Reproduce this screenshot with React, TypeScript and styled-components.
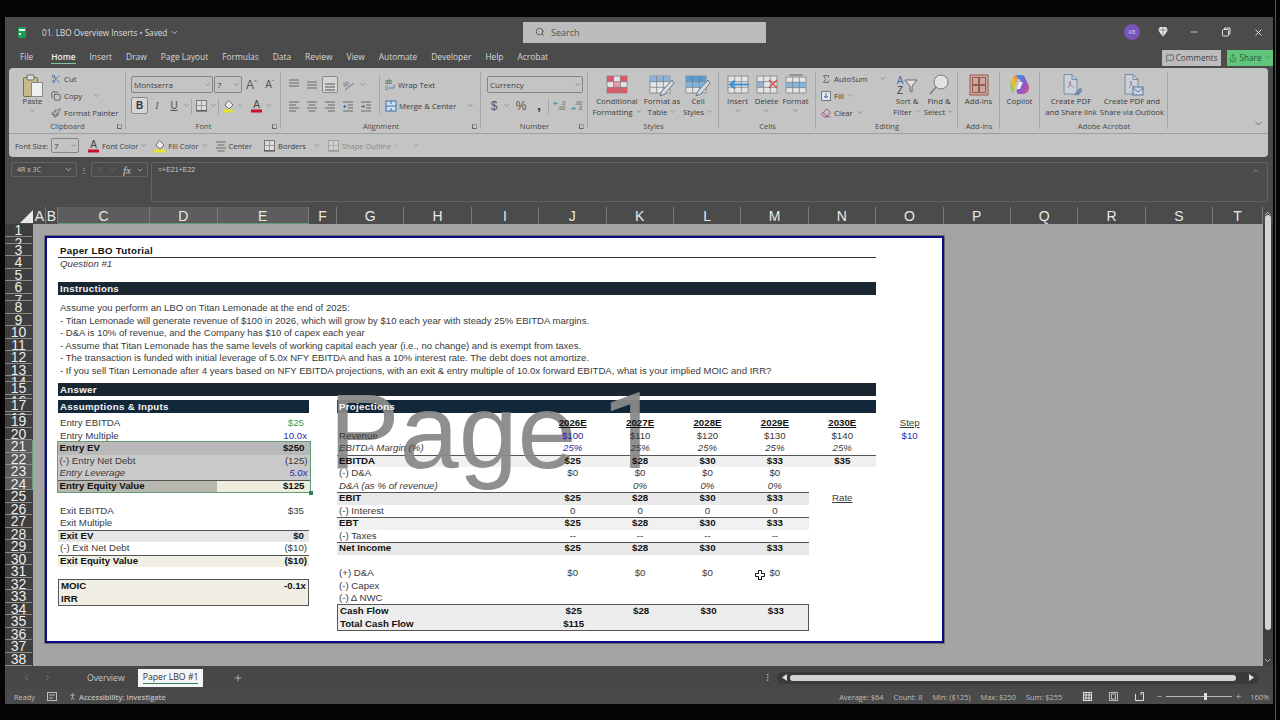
import React from 'react';
import styled, { createGlobalStyle } from 'styled-components';
import { ChevronDown, ChevronUp, Minus, Search, X, Check, Plus, Copy as CopyIcon, MessageSquare, Share as ShareIcon, ChevronLeft, ChevronRight, MoreVertical, Scissors, Sigma, Paintbrush, Eraser, PersonStanding } from 'lucide-react';

const GlobalStyle = createGlobalStyle`
  html, body { margin: 0; padding: 0; background: #000; overflow: hidden; }
  * { box-sizing: border-box; }
  body { font-family: "Open Sans", "Liberation Sans", sans-serif; }
`;

const Screen = styled.div`
  width: 1280px;
  height: 720px;
  padding: 17px 7px 16px 5px;
  background: linear-gradient(to right, #050505 1275px, #1c7a2c 1275px, #1c7a2c 1276px, #050505 1276px);
`;

const Excel = styled.div`
  height: 687px;
  display: flex;
  flex-direction: column;
  background: #4b4b4b;
  color: #333;
`;

/* title bar */
const TitleBar = styled.div`
  height: 30px;
  flex: none;
  display: flex;
  align-items: center;
  padding: 0 9.5px 0 13px;
  color: #ddd;
  font-size: 8.2px;
`;
const DocTitle = styled.div`
  width: 481px;
  margin-left: 16px;
  display: flex;
  align-items: center;
  gap: 3px;
`;
const SearchBox = styled.div`
  width: 243px;
  height: 21px;
  background: #bcbcbc;
  color: #555;
  display: flex;
  align-items: center;
  gap: 6px;
  padding-left: 12px;
  font-size: 9px;
`;
const WindowButtons = styled.div`
  margin-left: auto;
  display: flex;
  align-items: center;
  color: #e4e4e4;
`;
const WinBtn = styled.div<{ $ml: number }>`
  display: flex;
  margin-left: ${p => p.$ml}px;
`;
const Avatar = styled.div`
  width: 16px;
  height: 16px;
  border-radius: 50%;
  background: #7a54b8;
  color: #d8c8f0;
  font-size: 5.5px;
  display: flex;
  align-items: center;
  justify-content: center;
`;

/* tabs */
const MenuBar = styled.div`
  height: 21px;
  flex: none;
  display: flex;
  align-items: center;
  padding-left: 15px;
  gap: 14px;
  font-size: 8.4px;
  color: #d8d8d8;
`;
const MenuTab = styled.div<{ $active?: boolean }>`
  font-weight: ${p => (p.$active ? 600 : 400)};
  color: ${p => (p.$active ? '#f0f0f0' : '#d8d8d8')};
  border-bottom: 1px solid ${p => (p.$active ? '#7fc79a' : 'transparent')};
  padding-bottom: 1px;
  margin-left: ${p => (p.$active ? '4px' : '0')};
`;
const Comments = styled.div`
  margin-left: auto;
  width: 59px;
  height: 16px;
  background: #bcbcbc;
  color: #444;
  font-size: 8.2px;
  display: flex;
  align-items: center;
  justify-content: center;
  gap: 2px;
`;
const ShareBtn = styled.div`
  width: 46px;
  height: 16px;
  margin-left: -8px;
  background: #5fc67c;
  color: #2d5a3a;
  font-size: 8.2px;
  display: flex;
  align-items: center;
  justify-content: center;
  gap: 2px;
`;

/* ribbon */
const RibbonWrap = styled.div`
  margin: 0 5px 0 4px;
  height: 89px;
  flex: none;
  background: #c4c4c4;
  border-radius: 4px;
  overflow: hidden;
  font-size: 7.8px;
  color: #3c3c3c;
  white-space: nowrap;
`;
const RibbonMain = styled.div`
  height: 66px;
  display: flex;
  border-bottom: 1px solid #9f9f9f;
  position: relative;
`;
const Group = styled.div<{ $w: number; $plain?: boolean }>`
  width: ${p => p.$w}px;
  flex: none;
  display: flex;
  flex-direction: column;
  position: relative;
  &::after {
    content: '';
    display: ${p => (p.$plain ? 'none' : 'block')};
    position: absolute;
    right: 0;
    top: 4px;
    bottom: 4px;
    width: 1px;
    background: #a6a6a6;
  }
`;
const GroupBody = styled.div<{ $pl?: number; $gap?: number }>`
  height: 53px;
  display: flex;
  padding-left: ${p => p.$pl ?? 0}px;
  gap: ${p => p.$gap ?? 0}px;
`;
const GroupLabel = styled.div`
  height: 12px;
  line-height: 10px;
  text-align: center;
  font-size: 7.6px;
  color: #4a4a4a;
`;
const Launcher = styled.div`
  position: absolute;
  right: 4px;
  bottom: 4px;
  width: 5px;
  height: 5px;
  border-left: 1px solid #666;
  border-bottom: 1px solid #666;
  border-top: 1px solid #999;
  border-right: 1px solid #999;
`;
const Collapse = styled(ChevronDown).attrs({ size: 11, color: '#666' })`
  position: absolute;
  right: 4px;
  bottom: 4px;
`;
const BigBtn = styled.div<{ $w: number; $top?: number }>`
  width: ${p => p.$w}px;
  flex: none;
  display: flex;
  flex-direction: column;
  align-items: center;
  padding-top: ${p => p.$top ?? 6}px;
  line-height: 11px;
  text-align: center;
`;
const BigIcon = styled.div<{ $h?: number }>`
  height: ${p => p.$h ?? 21}px;
  display: flex;
  align-items: center;
  justify-content: center;
  margin-bottom: 0.5px;
`;
const SmallCol = styled.div<{ $w?: number }>`
  display: flex;
  flex-direction: column;
  padding-top: 2px;
  width: ${p => (p.$w ? `${p.$w}px` : 'auto')};
`;
const SmallBtn = styled.div`
  height: 17px;
  display: flex;
  align-items: center;
  gap: 3px;
`;
const FormCol = styled.div`
  display: flex;
  flex-direction: column;
  gap: 4px;
  padding-top: 8px;
`;
const FormRow = styled.div<{ $gap?: number }>`
  height: 17px;
  display: flex;
  align-items: center;
  gap: ${p => p.$gap ?? 0}px;
`;
const Select = styled.div<{ $w: number; $h?: number }>`
  width: ${p => p.$w}px;
  height: ${p => p.$h ?? 17}px;
  flex: none;
  border: 1px solid #858585;
  border-radius: 2px;
  padding: 0 1px 0 2px;
  display: flex;
  align-items: center;
  justify-content: space-between;
  font-size: 8px;
`;
const Toggle = styled.div<{ $on?: boolean; $w?: number; $size?: number; $ml?: number; $c?: string; $serif?: boolean }>`
  width: ${p => p.$w ?? 16}px;
  height: 17px;
  flex: none;
  margin-left: ${p => p.$ml ?? 0}px;
  display: flex;
  align-items: center;
  justify-content: center;
  border: 1px solid ${p => (p.$on ? '#8a8a8a' : 'transparent')};
  border-radius: 2px;
  background: ${p => (p.$on ? '#d6d6d6' : 'transparent')};
  font-family: ${p => (p.$serif ? '"Liberation Serif", serif' : '"Liberation Sans", sans-serif')};
  font-size: ${p => p.$size ?? 10}px;
  color: ${p => p.$c ?? '#555'};
`;
const Mini = styled.span`
  font-size: 6px;
  align-self: flex-start;
  margin-top: 2px;
`;
const VRule = styled.div<{ $h?: number; $mt?: number }>`
  width: 1px;
  height: ${p => p.$h ?? 16}px;
  margin-top: ${p => p.$mt ?? 0}px;
  flex: none;
  background: #a6a6a6;
`;
const Caret = styled(ChevronDown).attrs({ size: 7, strokeWidth: 1.6 })<{ $ml?: number }>`
  flex: none;
  color: #555;
  margin-left: ${p => p.$ml ?? 0}px;
`;

/* quick access row */
const QuickBar = styled.div`
  height: 23px;
  display: flex;
  align-items: center;
  padding-left: 6px;
  font-size: 7.5px;
`;
const QuickLabel = styled.span`
  width: 36px;
`;
const QuickItem = styled.div<{ $dim?: boolean; $ml: number }>`
  display: flex;
  align-items: center;
  gap: 2px;
  margin-left: ${p => p.$ml}px;
  opacity: ${p => (p.$dim ? 0.45 : 1)};
`;

/* formula bar */
const FormulaBar = styled.div`
  height: 40px;
  flex: none;
  margin: 5px 5px 5px 6px;
  display: flex;
  align-items: flex-start;
  color: #c8c8c8;
`;
const NameBox = styled.div`
  width: 66px;
  height: 15px;
  border: 1px solid #636363;
  border-radius: 2px;
  font-size: 7px;
  display: flex;
  align-items: center;
  justify-content: space-between;
  padding: 0 3px 0 5px;
`;
const Dots = styled.div`
  width: 14px;
  text-align: center;
  font-size: 8px;
  line-height: 15px;
`;
const FxBox = styled.div`
  width: 57px;
  height: 15px;
  border: 1px solid #636363;
  border-radius: 2px;
  display: flex;
  align-items: center;
  justify-content: space-between;
  padding: 0 3px;
  color: #6d6d6d;
  font-family: "Liberation Serif", serif;
  font-style: italic;
  font-size: 11px;
`;
const FxMark = styled.span`
  color: #c8c8c8;
`;
const FormulaInput = styled.div`
  flex: 1;
  height: 40px;
  margin-left: 3px;
  border: 1px solid #636363;
  border-radius: 2px;
  padding: 3px 6px;
  font-family: "Liberation Sans", sans-serif;
  font-size: 7px;
  display: flex;
  justify-content: space-between;
`;

/* sheet */
const ColHeaders = styled.div`
  height: 17px;
  flex: none;
  display: flex;
  align-items: stretch;
  font-family: "Liberation Sans", sans-serif;
  color: #e8e8e8;
  font-size: 14px;
`;
const Corner = styled.div`
  width: 29px;
  flex: none;
  display: flex;
  align-items: flex-end;
  justify-content: flex-end;
  padding: 0 1px 1px 0;
`;
const ColHead = styled.div<{ $w: number; $on?: boolean }>`
  width: ${p => p.$w}px;
  flex: none;
  text-align: center;
  line-height: 18px;
  background: ${p => (p.$on ? '#5d5d5d' : 'transparent')};
  border-right: 1px solid #7a7a7a;
  border-bottom: 1px solid ${p => (p.$on ? '#5f9f78' : 'transparent')};
`;
const SheetBody = styled.div`
  height: 442px;
  flex: none;
  display: flex;
`;
const RowHeaders = styled.div`
  width: 28px;
  flex: none;
  overflow: hidden;
  font-family: "Liberation Sans", sans-serif;
  color: #ececec;
  font-size: 14px;
  background: #3e3e3e;
`;
const RowHead = styled.div<{ $h: number; $on?: boolean }>`
  height: ${p => p.$h}px;
  line-height: ${p => Math.max(p.$h, 12)}px;
  overflow: hidden;
  text-align: center;
  background: ${p => (p.$on ? '#5a5a5a' : '#3e3e3e')};
  box-shadow: inset 0 -1px 0 #8a8a8a;
  border-right: 1px solid ${p => (p.$on ? '#5f9f78' : '#3e3e3e')};
`;
const Canvas = styled.div`
  width: 1230px;
  flex: none;
  background: #a4a4a4;
  padding: 12px 0 0 12px;
  overflow: hidden;
`;
const Page = styled.div`
  position: relative;
  width: 899px;
  height: 407px;
  padding: 7px 0 0 11px;
  background: #fff;
  border: 2px solid #0c0c85;
  box-shadow: 0 0 0 0.5px #333;
  font-family: "Liberation Sans", sans-serif;
  font-size: 9.7px;
  color: #3a3a3a;
  white-space: nowrap;
`;
const Watermark = styled.div`
  position: absolute;
  left: 282px;
  top: 140px;
  z-index: 1;
  font-size: 106px;
  line-height: 106px;
  color: #8a8a8a;
  opacity: 0.95;
  pointer-events: none;
`;
const WatermarkDigit = styled.span`
  font-family: Roboto, "Liberation Sans", sans-serif;
  margin-left: -4px;
`;
const Cursor = styled.div`
  position: absolute;
  left: 708px;
  top: 332px;
  z-index: 3;
  width: 10px;
  height: 10px;
`;
const Txt = styled.span<{ $b?: boolean; $i?: boolean; $c?: string; $u?: boolean; $pr?: number }>`
  position: relative;
  z-index: 2;
  font-weight: ${p => (p.$b ? 700 : 400)};
  font-style: ${p => (p.$i ? 'italic' : 'normal')};
  color: ${p => p.$c ?? (p.$b ? '#111' : 'inherit')};
  text-decoration: ${p => (p.$u ? 'underline' : 'none')};
  padding-right: ${p => p.$pr ?? 0}px;
`;
const SheetTitle = styled(Txt)`
  letter-spacing: 0.3px;
`;
const Line = styled.div<{ $h?: number; $rule?: boolean }>`
  width: 818px;
  height: ${p => p.$h ?? 12.53}px;
  line-height: ${p => p.$h ?? 12.53}px;
  padding-left: 2px;
  overflow: hidden;
  box-shadow: ${p => (p.$rule ? 'inset 0 -1px 0 #333' : 'none')};
`;
const Instruction = styled(Line)`
  font-size: 9.55px;
`;
const Band = styled.div<{ $w?: number; $h?: number; $navy?: boolean }>`
  width: ${p => p.$w ?? 818}px;
  height: ${p => p.$h ?? 13}px;
  line-height: ${p => p.$h ?? 13}px;
  padding-left: 2px;
  background: ${p => (p.$navy ? '#12283a' : '#1a2733')};
  color: #f4f4f4;
  font-weight: 700;
  letter-spacing: 0.3px;
`;
const Spacer = styled.div<{ $h: number }>`
  height: ${p => p.$h}px;
`;
const Split = styled.div`
  display: flex;
  align-items: flex-start;
  gap: 28px;
`;
const LeftCol = styled.div`
  width: 251px;
  flex: none;
`;
const RightCol = styled.div`
  width: 606px;
  flex: none;
`;
const KV = styled.div<{ $fill?: string; $top?: boolean; $half?: string }>`
  height: 12.53px;
  line-height: 12.53px;
  display: flex;
  justify-content: space-between;
  padding: 0 2px;
  background: ${p => (p.$half ? `linear-gradient(to right, ${p.$half} 0 159px, ${p.$fill} 159px)` : p.$fill ?? 'transparent')};
  box-shadow: ${p => (p.$top ? 'inset 0 1px 0 #555' : 'none')};
`;
const Selection = styled.div`
  position: relative;
  margin: -1px -1.5px -1px -1.5px;
  border: 1.5px solid #5f9f78;
  &::after {
    content: '';
    position: absolute;
    right: -3px;
    bottom: -3px;
    width: 4px;
    height: 4px;
    background: #2f7d52;
  }
`;
const Boxed = styled.div<{ $w?: number }>`
  width: ${p => (p.$w ? `${p.$w}px` : 'auto')};
  border: 1px solid #555;
  margin-top: -0.5px;
`;
const ProjRow = styled.div<{ $fill?: string; $top?: boolean; $reach?: number }>`
  height: 12.53px;
  line-height: 12.53px;
  display: grid;
  grid-template-columns: 202px repeat(6, 67.4px);
  background-repeat: no-repeat;
  background-size: ${p => p.$reach ?? 539}px 100%;
  background-image: ${p =>
    `linear-gradient(to bottom, ${p.$top ? '#555 0 1px,' : ''} ${p.$fill ?? 'transparent'} ${p.$top ? '1px' : '0'})`};
`;
const Label = styled.div`
  padding-left: 2px;
`;
const Val = styled.div`
  text-align: center;
`;

/* tabs and status */
const TabsBar = styled.div`
  height: 23px;
  flex: none;
  display: flex;
  align-items: center;
  color: #bdbdbd;
  font-size: 8.7px;
  background: #474747;
  padding-left: 17px;
`;
const NavArrow = styled.div<{ $ml?: number }>`
  display: flex;
  margin-left: ${p => p.$ml ?? 0}px;
  color: #888;
`;
const SheetTab = styled.div<{ $active?: boolean }>`
  height: ${p => (p.$active ? '18px' : 'auto')};
  margin-left: ${p => (p.$active ? '8px' : '30px')};
  padding: 0 5px;
  background: ${p => (p.$active ? '#f6f6f6' : 'transparent')};
  color: ${p => (p.$active ? '#333' : '#c4c4c4')};
  display: flex;
  align-items: center;
`;
const ActiveLabel = styled.span`
  border-bottom: 1px solid #2f7d52;
  line-height: 12px;
`;
const AddSheet = styled(Plus).attrs({ size: 10 })`
  margin-left: 30px;
`;
const SplitDots = styled(MoreVertical).attrs({ size: 9 })`
  margin-left: 520px;
`;
const HScroll = styled.div`
  width: 482px;
  height: 12px;
  border-radius: 6px;
  background: #3a3a3a;
  margin-left: 5px;
  display: flex;
  align-items: center;
  padding: 0 5px;
  gap: 3px;
  color: #ddd;
`;
const Thumb = styled.div`
  flex: 1;
  height: 6px;
  border-radius: 3px;
  background: #d4d4d4;
  margin-right: 10px;
`;
const VScroll = styled.div`
  flex: 1;
  background: #3f3f3f;
  display: flex;
  flex-direction: column;
  align-items: center;
  padding: 0 1px 1px 0;
  color: #e4e4e4;
`;
const VThumb = styled.div`
  width: 6px;
  height: 415px;
  margin-top: -3px;
  border-radius: 3px;
  background: #d4d4d4;
`;
const UpArrow = styled(ChevronUp).attrs({ size: 9 })`
  margin-top: -15px;
  z-index: 1;
`;
const DownArrow = styled(ChevronDown).attrs({ size: 9 })`
  margin-top: auto;
`;
const StatusBar = styled.div`
  height: 15px;
  flex: none;
  display: flex;
  align-items: center;
  padding: 0 4px 0 9px;
  font-size: 7.4px;
  color: #bfbfbf;
  background: #4a4a4a;
`;
const StatusIcon = styled.div`
  display: flex;
  margin-left: 12px;
`;
const Accessibility = styled.div`
  margin-left: 11px;
  display: flex;
  align-items: center;
  gap: 2px;
  font-weight: 600;
`;
const StatusStats = styled.div`
  margin-left: auto;
  display: flex;
  gap: 10px;
`;
const ViewBtns = styled.div`
  margin-left: 21px;
  display: flex;
  align-items: center;
  gap: 17px;
`;
const ZoomMinus = styled(Minus).attrs({ size: 7 })`
  margin-left: 12px;
`;
const Zoomer = styled.div`
  width: 66px;
  margin: 0 3px;
  height: 1px;
  background: #bbb;
  position: relative;
  &::after {
    content: '';
    position: absolute;
    left: 38px;
    top: -3px;
    width: 3px;
    height: 7px;
    background: #ddd;
  }
`;
const ZoomPct = styled.span`
  margin-left: 8px;
`;

/* drawings */
const Svg = ({ w, h, vb, children }: { w: number; h: number; vb?: string; children: React.ReactNode }) => (
  <svg width={w} height={h} viewBox={vb ?? `0 0 ${w} ${h}`} fill="none">
    {children}
  </svg>
);

const Lines = ({ align, boxed }: { align: 'l' | 'c' | 'r' | 'top' | 'mid' | 'bot'; boxed?: boolean }) => {
  const rows = align === 'top' ? [2, 5, 8] : align === 'mid' ? [4, 7, 10] : align === 'bot' ? [6, 9, 12] : [3, 6, 9, 12];
  return (
    <Svg w={12} h={14}>
      {rows.map((y, i) => {
        const short = i % 2 === 1 && 'lcr'.includes(align);
        const x1 = short && align === 'r' ? 4 : short && align === 'c' ? 2.5 : 1;
        const x2 = short && align === 'l' ? 8 : short && align === 'c' ? 9.5 : 11;
        return <path key={y} d={`M${x1} ${y}H${x2}`} stroke={boxed ? '#555' : '#6a6a6a'} />;
      })}
    </Svg>
  );
};

const Indent = ({ flip }: { flip?: boolean }) => (
  <Svg w={12} h={14}>
    <path d="M1 3H11M6 6H11M6 9H11M1 12H11" stroke="#6a6a6a" />
    <path d={flip ? 'M1 7.5H4M3 6L4.5 7.5L3 9' : 'M4.5 7.5H1.5M3 6L1.5 7.5L3 9'} stroke="#3f6ea8" />
  </Svg>
);

const Table = ({ fill, head, x = 2, y = 2, w = 20, h = 17 }: { fill?: string[]; head?: string; x?: number; y?: number; w?: number; h?: number }) => {
  const cw = w / 3;
  const ch = h / 3;
  return (
    <>
      <rect x={x} y={y} width={w} height={h} fill="#e4e4e4" stroke="#777" strokeWidth=".7" />
      {head && <rect x={x} y={y} width={w} height={ch} fill={head} />}
      {fill?.map((c, i) => (
        <rect key={i} x={x + cw * (i % 3)} y={y + ch * Math.floor(i / 3)} width={cw} height={ch} fill={c} />
      ))}
      <path d={`M${x + cw} ${y}v${h}M${x + 2 * cw} ${y}v${h}M${x} ${y + ch}h${w}M${x} ${y + 2 * ch}h${w}`} stroke="#777" strokeWidth=".7" />
    </>
  );
};

const Brush = () => (
  <path d="M24 6 L14 17 L12 22 L17 20 L26 9 Z" fill="#d8d8d8" stroke="#5d7890" strokeWidth="1" />
);

const PasteIcon = () => (
  <Svg w={22} h={24}>
    <rect x="1.5" y="3.5" width="14" height="19" rx="1" fill="#c9b98c" stroke="#7a6c45" />
    <rect x="5" y="1" width="7" height="5" rx="1" fill="#ddd" stroke="#666" />
    <rect x="9.5" y="8.5" width="11" height="14" fill="#f0f0f0" stroke="#888" />
  </Svg>
);

const CopilotIcon = () => (
  <Svg w={21} h={23}>
    <defs>
      <linearGradient id="cp1" x1="0" y1="0" x2="1" y2="1">
        <stop offset="0" stopColor="#3aa0e8" />
        <stop offset=".5" stopColor="#7b5cd6" />
        <stop offset="1" stopColor="#e8517a" />
      </linearGradient>
      <linearGradient id="cp2" x1="0" y1="1" x2="1" y2="0">
        <stop offset="0" stopColor="#46c87a" />
        <stop offset=".5" stopColor="#e9c23c" />
        <stop offset="1" stopColor="#ef7d45" />
      </linearGradient>
    </defs>
    <path d="M7 2 H13 C15 2 16 4 17 7 L20 13 C21 17 18 21 14 21 L10 21 C8 21 7 19 8 17 L12 7 C9 6 7 5 7 2Z" fill="url(#cp1)" />
    <path d="M1 12 C1 7 4 3 7 2 C9 5 8 9 6 14 L5 18 C4 21 2 18 1 12Z" fill="url(#cp2)" />
    <path d="M10 9 L14 9 L11 16 L8 16Z" fill="#f3e9ef" />
  </Svg>
);

const PdfIcon = ({ mail }: { mail?: boolean }) => (
  <Svg w={23} h={24}>
    <path d="M4 1.5 H12 L17 6.5 V21 H4Z" stroke="#6d86a8" fill="#cdd0d6" strokeWidth=".9" />
    <path d="M12 1.5 V6.5 H17" stroke="#6d86a8" strokeWidth=".9" />
    <path d="M8 15 C10 12 11 9 10 8 C9 9 10 13 14 14" stroke="#8a6f7a" strokeWidth=".7" />
    {mail ? (
      <>
        <rect x="12" y="14" width="10" height="8" fill="#d0d4da" stroke="#4f78a8" />
        <path d="M12 15 L17 19 L22 15" stroke="#4f78a8" />
      </>
    ) : (
      <path d="M15 22 L21 15 M17.5 22 L22 17" stroke="#5e7da3" strokeWidth="1.4" />
    )}
  </Svg>
);

const FontColorIcon = ({ bar }: { bar: string }) => (
  <Svg w={13} h={14}>
    <text x="6.5" y="9" textAnchor="middle" fontFamily="Liberation Sans" fontSize="10" fill="#444">A</text>
    <rect x="1" y="10.5" width="11" height="3" fill={bar} />
  </Svg>
);
const FillIcon = ({ bar = '#e6e22e' }: { bar?: string }) => (
  <Svg w={13} h={14}>
    <path d="M6.5 1.5 L11 6 L7 10 L3 6Z" fill="#ececec" stroke="#555" strokeWidth=".8" />
    <rect x="1" y="10.5" width="11" height="3" fill={bar} />
  </Svg>
);
const BordersIcon = () => (
  <Svg w={13} h={13}>
    <rect x="1.5" y="1.5" width="10" height="10" fill="#ddd" stroke="#777" />
    <path d="M6.5 1.5v10M1.5 6.5h10" stroke="#999" />
    <path d="M1 12h11" stroke="#444" />
  </Svg>
);
const DecimalIcon = ({ more }: { more?: boolean }) => (
  <Svg w={15} h={13}>
    <text x="14" y="5.5" textAnchor="end" fontFamily="Liberation Sans" fontSize="6" fill="#555">{more ? '.0' : '.00'}</text>
    <text x="14" y="12" textAnchor="end" fontFamily="Liberation Sans" fontSize="6" fill="#555">{more ? '.00' : '.0'}</text>
    <path d={more ? 'M6 4H1M3 2L1 4L3 6' : 'M1 10H6M4 8L6 10L4 12'} stroke="#3f8aa8" />
  </Svg>
);

const COLS: [string, number, boolean?][] = [
  ['A', 12], ['B', 12], ['C', 92, true], ['D', 67.5, true], ['E', 91.5, true], ['F', 28], ['G', 67.4], ['H', 67.4], ['I', 67.4], ['J', 67.4],
  ['K', 67.4], ['L', 67.4], ['M', 67.4], ['N', 67.4], ['O', 67.4], ['P', 67.4], ['Q', 67.4], ['R', 67.4], ['S', 67.4], ['T', 50],
];

const rowHeight = (n: number) => {
  if (n === 2) return 7;
  if (n === 7) return 7.5;
  if (n === 14) return 6;
  if (n === 16) return 4.5;
  if (n === 18) return 3.5;
  return 12.53;
};
const ROWS = Array.from({ length: 38 }, (_, i) => i + 1);

const BLUE = '#2a2aa8';
const GREEN = '#3aa14a';

const INSTRUCTIONS = [
  'Assume you perform an LBO on Titan Lemonade at the end of 2025:',
  '- Titan Lemonade will generate revenue of $100 in 2026, which will grow by $10 each year with steady 25% EBITDA margins.',
  '- D&A is 10% of revenue, and the Company has $10 of capex each year',
  '- Assume that Titan Lemonade has the same levels of working capital each year (i.e., no change) and is exempt from taxes.',
  '- The transaction is funded with initial leverage of 5.0x NFY EBITDA and has a 10% interest rate. The debt does not amortize.',
  '- If you sell Titan Lemonade after 4 years based on NFY EBITDA projections, with an exit & entry multiple of 10.0x forward EBITDA, what is your implied MOIC and IRR?',
];

type Proj = {
  label: string;
  vals?: string[];
  b?: boolean;
  i?: boolean;
  fill?: string;
  top?: boolean;
  reach?: number;
  valColor?: string[];
  note?: string;
  noteU?: boolean;
  noteColor?: string;
  noteAt?: number;
};

const PROJ: Proj[] = [
  { label: '', vals: ['2026E', '2027E', '2028E', '2029E', '2030E'], b: true, note: 'Step', noteU: true },
  { label: 'Revenue', vals: ['$100', '$110', '$120', '$130', '$140'], valColor: [BLUE], note: '$10', noteColor: BLUE },
  { label: 'EBITDA Margin (%)', vals: ['25%', '25%', '25%', '25%', '25%'], i: true, valColor: [BLUE] },
  { label: 'EBITDA', vals: ['$25', '$28', '$30', '$33', '$35'], b: true, top: true, fill: '#f0f0f0' },
  { label: '(-) D&A', vals: ['$0', '$0', '$0', '$0'] },
  { label: 'D&A (as % of revenue)', vals: ['', '0%', '0%', '0%'], i: true },
  { label: 'EBIT', vals: ['$25', '$28', '$30', '$33'], b: true, top: true, fill: '#e8e8e8', reach: 472, note: 'Rate', noteU: true, noteAt: 4 },
  { label: '(-) Interest', vals: ['0', '0', '0', '0'] },
  { label: 'EBT', vals: ['$25', '$28', '$30', '$33'], b: true, top: true, fill: '#f1f1f1', reach: 472 },
  { label: '(-) Taxes', vals: ['--', '--', '--', '--'] },
  { label: 'Net Income', vals: ['$25', '$28', '$30', '$33'], b: true, top: true, fill: '#e8e8e8', reach: 472 },
  { label: '' },
  { label: '(+) D&A', vals: ['$0', '$0', '$0', '$0'] },
  { label: '(-) Capex' },
  { label: '(-) Δ NWC' },
];

const ProjLine = ({ r }: { r: Proj }) => (
  <ProjRow $fill={r.fill} $top={r.top} $reach={r.reach}>
    <Label>
      <Txt $b={r.b} $i={r.i}>{r.label}</Txt>
    </Label>
    {[0, 1, 2, 3, 4].map(i => (
      <Val key={i}>
        {r.noteAt === i ? (
          <Txt $u={r.noteU}>{r.note}</Txt>
        ) : (
          <Txt $b={r.b} $i={r.i} $u={r.label === ''} $c={r.valColor?.[i]}>{r.vals?.[i]}</Txt>
        )}
      </Val>
    ))}
    <Val>
      {r.noteAt === undefined && <Txt $u={r.noteU} $c={r.noteColor}>{r.note}</Txt>}
    </Val>
  </ProjRow>
);

const Ribbon = () => (
  <RibbonWrap>
    <RibbonMain>
      <Group $w={117}>
        <GroupBody $pl={10} $gap={5}>
          <BigBtn $w={27} $top={8}>
            <BigIcon $h={19}><PasteIcon /></BigIcon>
            Paste
            <Caret />
          </BigBtn>
          <SmallCol>
            <SmallBtn><Scissors size={10} color="#4a6f96" />Cut</SmallBtn>
            <SmallBtn><CopyIcon size={10} color="#555" />Copy <Caret $ml={8} /></SmallBtn>
            <SmallBtn><Paintbrush size={10} color="#555" />Format Painter</SmallBtn>
          </SmallCol>
        </GroupBody>
        <GroupLabel>Clipboard</GroupLabel>
        <Launcher />
      </Group>
      <Group $w={155}>
        <GroupBody $pl={5}>
          <FormCol>
            <FormRow $gap={1}>
              <Select $w={82}>Montserra<Caret /></Select>
              <Select $w={28}>7<Caret /></Select>
              <Toggle $w={17} $size={12}>A<Mini>^</Mini></Toggle>
              <Toggle $w={17} $size={10}>A<Mini>ˇ</Mini></Toggle>
            </FormRow>
            <FormRow $gap={1}>
              <Toggle $on $w={17} $c="#333"><b>B</b></Toggle>
              <Toggle $serif><i>I</i></Toggle>
              <Toggle><u>U</u></Toggle>
              <Caret />
              <VRule />
              <Toggle><BordersIcon /></Toggle>
              <Caret />
              <VRule />
              <Toggle><FillIcon /></Toggle>
              <Caret />
              <Toggle $ml={3}><FontColorIcon bar="#c8102e" /></Toggle>
              <Caret />
            </FormRow>
          </FormCol>
        </GroupBody>
        <GroupLabel>Font</GroupLabel>
        <Launcher />
      </Group>
      <Group $w={200}>
        <GroupBody $pl={5} $gap={5}>
          <FormCol>
            <FormRow $gap={2}>
              <Toggle><Lines align="top" /></Toggle>
              <Toggle><Lines align="mid" /></Toggle>
              <Toggle $on><Lines align="bot" boxed /></Toggle>
              <Toggle $ml={1}>
                <Svg w={14} h={12}>
                  <text x="1" y="7" fontFamily="Liberation Sans" fontSize="6" fill="#666" transform="rotate(-30 4 6)">ab</text>
                  <path d="M3 11L12 4" stroke="#6b6b9a" />
                </Svg>
              </Toggle>
              <Caret />
            </FormRow>
            <FormRow $gap={2}>
              <Toggle><Lines align="l" /></Toggle>
              <Toggle><Lines align="c" /></Toggle>
              <Toggle><Lines align="r" /></Toggle>
              <Toggle><Indent /></Toggle>
              <Toggle><Indent flip /></Toggle>
            </FormRow>
          </FormCol>
          <VRule $h={38} $mt={8} />
          <FormCol>
            <FormRow $gap={2}>
              <Svg w={11} h={13}>
                <text x="0" y="6" fontFamily="Liberation Sans" fontSize="6.5" fill="#555">ab</text>
                <text x="0" y="12" fontFamily="Liberation Sans" fontSize="6.5" fill="#3f6ea8">c</text>
                <path d="M4 10h4a1.5 1.5 0 000-3" stroke="#3f6ea8" strokeWidth=".8" />
              </Svg>
              <span>Wrap Text</span>
            </FormRow>
            <FormRow $gap={2}>
              <Svg w={12} h={12}><rect x="1" y="1" width="10" height="10" fill="#cfe0ee" stroke="#3f6ea8" /><path d="M1 6h10M6 1v3M6 8v3" stroke="#3f6ea8" /></Svg>
              <span>Merge &amp; Center</span>
              <Caret $ml={9} />
            </FormRow>
          </FormCol>
        </GroupBody>
        <GroupLabel>Alignment</GroupLabel>
        <Launcher />
      </Group>
      <Group $w={107}>
        <GroupBody $pl={6}>
          <FormCol>
            <Select $w={96}>Currency<Caret /></Select>
            <FormRow $gap={2}>
              <Toggle $w={14} $size={12}>$</Toggle>
              <Caret />
              <Toggle $w={18} $size={12}>%</Toggle>
              <Toggle $w={14} $size={13} $c="#333"><b>,</b></Toggle>
              <VRule />
              <Toggle $w={15} $ml={1}><DecimalIcon more /></Toggle>
              <Toggle $w={15}><DecimalIcon /></Toggle>
            </FormRow>
          </FormCol>
        </GroupBody>
        <GroupLabel>Number</GroupLabel>
        <Launcher />
      </Group>
      <Group $w={131}>
        <GroupBody $pl={3}>
          <BigBtn $w={52}>
            <BigIcon><Svg w={24} h={21}><Table fill={['#d85a6a', '', '#d85a6a', '', '#e89aa5', '', '#d85a6a', '#d85a6a', '#d85a6a']} /></Svg></BigIcon>
            Conditional
            <span>Formatting <Caret /></span>
          </BigBtn>
          <BigBtn $w={38}>
            <BigIcon><Svg w={28} h={22}><Table head="#8fb3d6" /><Brush /></Svg></BigIcon>
            Format as
            <span>Table <Caret /></span>
          </BigBtn>
          <BigBtn $w={34}>
            <BigIcon><Svg w={28} h={22}><Table head="#5b9bd5" fill={['', '', '', '#7fb5e0', '#7fb5e0', '#7fb5e0']} /><Brush /></Svg></BigIcon>
            Cell
            <span>Styles <Caret /></span>
          </BigBtn>
        </GroupBody>
        <GroupLabel>Styles</GroupLabel>
      </Group>
      <Group $w={97}>
        <GroupBody $pl={4}>
          <BigBtn $w={29}>
            <BigIcon>
              <Svg w={24} h={21}>
                <Table />
                <path d="M23 10.5H5M9 6.5L4 10.5L9 14.5" stroke="#3f8fd0" strokeWidth="2.2" />
              </Svg>
            </BigIcon>
            Insert
            <Caret />
          </BigBtn>
          <BigBtn $w={29}>
            <BigIcon><Svg w={24} h={21}><Table fill={['', '', '', '#8fb3d6', '', '']} /><path d="M14 6l8 8M22 6l-8 8" stroke="#d14a4a" strokeWidth="1.2" /></Svg></BigIcon>
            Delete
            <Caret />
          </BigBtn>
          <BigBtn $w={29}>
            <BigIcon>
              <Svg w={24} h={21}>
                <Table fill={['', '', '', '#7fb5e0', '#7fb5e0', '#7fb5e0']} y={3} h={16} />
                <path d="M5 1H19" stroke="#666" />
              </Svg>
            </BigIcon>
            Format
            <Caret />
          </BigBtn>
        </GroupBody>
        <GroupLabel>Cells</GroupLabel>
      </Group>
      <Group $w={142}>
        <GroupBody $pl={5}>
          <SmallCol $w={70}>
            <SmallBtn><Sigma size={10} color="#555" />AutoSum <Caret $ml={9} /></SmallBtn>
            <SmallBtn><Svg w={10} h={10}><rect x=".5" y=".5" width="9" height="9" fill="#dfe8f0" stroke="#777" /><path d="M5 2v5M3 5l2 2 2-2" stroke="#3f6ea8" /></Svg>Fill <Caret /></SmallBtn>
            <SmallBtn><Eraser size={10} color="#a03a78" />Clear <Caret /></SmallBtn>
          </SmallCol>
          <BigBtn $w={32}>
            <BigIcon>
              <Svg w={24} h={22}>
                <text x="5" y="10" textAnchor="middle" fontFamily="Liberation Sans" fontSize="10" fill="#3f6ea8">A</text>
                <text x="5" y="20" textAnchor="middle" fontFamily="Liberation Sans" fontSize="10" fill="#444">Z</text>
                <path d="M10 6h12l-5 6v6l-2-1v-5z" fill="#e4e4e4" stroke="#666" />
              </Svg>
            </BigIcon>
            Sort &amp;
            <span>Filter <Caret /></span>
          </BigBtn>
          <BigBtn $w={32}>
            <BigIcon>
              <Svg w={22} h={24}>
                <circle cx="13" cy="9" r="7" fill="#e3e3e3" stroke="#777" />
                <path d="M8 14L2 21" stroke="#777" strokeWidth="1.2" />
              </Svg>
            </BigIcon>
            Find &amp;
            <span>Select <Caret /></span>
          </BigBtn>
        </GroupBody>
        <GroupLabel>Editing</GroupLabel>
      </Group>
      <Group $w={42}>
        <GroupBody>
          <BigBtn $w={41}>
            <BigIcon>
              <Svg w={20} h={22}>
                <rect x="1" y="1" width="18" height="20" fill="#c8a9a2" stroke="#9c5a4e" />
                <rect x="3.5" y="3.5" width="6" height="7" stroke="#9c5a4e" />
                <rect x="10.5" y="3.5" width="6" height="7" stroke="#9c5a4e" />
                <rect x="3.5" y="11.5" width="6" height="7" stroke="#9c5a4e" />
                <rect x="10.5" y="11.5" width="6" height="7" stroke="#9c5a4e" />
              </Svg>
            </BigIcon>
            Add-ins
          </BigBtn>
        </GroupBody>
        <GroupLabel>Add-ins</GroupLabel>
      </Group>
      <Group $w={40}>
        <GroupBody>
          <BigBtn $w={39}>
            <BigIcon><CopilotIcon /></BigIcon>
            Copilot
          </BigBtn>
        </GroupBody>
        <GroupLabel />
      </Group>
      <Group $w={128}>
        <GroupBody $pl={3}>
          <BigBtn $w={56}>
            <BigIcon><PdfIcon /></BigIcon>
            Create PDF
            <span>and Share link</span>
          </BigBtn>
          <BigBtn $w={66}>
            <BigIcon><PdfIcon mail /></BigIcon>
            Create PDF and
            <span>Share via Outlook</span>
          </BigBtn>
        </GroupBody>
        <GroupLabel>Adobe Acrobat</GroupLabel>
      </Group>
      <Collapse />
    </RibbonMain>
    <QuickBar>
      <QuickLabel>Font Size:</QuickLabel>
      <Select $w={28} $h={15}>7<Caret /></Select>
      <QuickItem $ml={8}><FontColorIcon bar="#c8102e" />Font Color<Caret /></QuickItem>
      <QuickItem $ml={6}><FillIcon />Fill Color<Caret /></QuickItem>
      <QuickItem $ml={7}><Lines align="c" />Center</QuickItem>
      <QuickItem $ml={11}><BordersIcon />Borders <Caret $ml={5} /></QuickItem>
      <QuickItem $ml={7} $dim><BordersIcon />Shape Outline<Caret /></QuickItem>
      <Caret $ml={12} />
    </QuickBar>
  </RibbonWrap>
);

const Sheet = () => (
  <Page>
    <Watermark>Page <WatermarkDigit>1</WatermarkDigit></Watermark>
    <Cursor>
      <Svg w={10} h={10}>
        <path d="M3.5.5h3v3h3v3h-3v3h-3v-3h-3v-3h3z" fill="#fff" stroke="#111" />
      </Svg>
    </Cursor>
    <Line $rule><SheetTitle $b>Paper LBO Tutorial</SheetTitle></Line>
    <Line><Txt $i>Question #1</Txt></Line>
    <Line $h={11.53} />
    <Band $h={13.5}>Instructions</Band>
    <Spacer $h={7} />
    {INSTRUCTIONS.map(t => (
      <Instruction key={t}>{t}</Instruction>
    ))}
    <Spacer $h={6} />
    <Band>Answer</Band>
    <Spacer $h={4} />
    <Split>
      <Band $w={251} $navy>Assumptions &amp; Inputs</Band>
      <Band $w={539} $navy><Txt $b $c="#f4f4f4">Projections</Txt></Band>
    </Split>
    <Spacer $h={4} />
    <Split>
      <LeftCol>
        <KV><span>Entry EBITDA</span><Txt $c={GREEN} $pr={3}>$25</Txt></KV>
        <KV><span>Entry Multiple</span><Txt $c={BLUE}>10.0x</Txt></KV>
        <Selection>
          <KV $fill="#b9b9b9"><Txt $b>Entry EV</Txt><Txt $b $pr={3}>$250</Txt></KV>
          <KV $fill="#c9c9c9"><span>(-) Entry Net Debt</span><span>(125)</span></KV>
          <KV $fill="#c9c9c9"><Txt $i>Entry Leverage</Txt><Txt $i $c={BLUE}>5.0x</Txt></KV>
          <KV $fill="#eeecdd" $half="#b7b7ad" $top><Txt $b>Entry Equity Value</Txt><Txt $b $pr={3}>$125</Txt></KV>
        </Selection>
        <KV />
        <KV><span>Exit EBITDA</span><Txt $pr={3}>$35</Txt></KV>
        <KV><span>Exit Multiple</span></KV>
        <KV $fill="#e6e6e6" $top><Txt $b>Exit EV</Txt><Txt $b $pr={3}>$0</Txt></KV>
        <KV><span>(-) Exit Net Debt</span><span>($10)</span></KV>
        <KV $fill="#f1efe3" $top><Txt $b>Exit Equity Value</Txt><Txt $b>($10)</Txt></KV>
        <KV />
        <Boxed>
          <KV $fill="#f1efe3"><Txt $b>MOIC</Txt><Txt $b>-0.1x</Txt></KV>
          <KV $fill="#f1efe3"><Txt $b>IRR</Txt></KV>
        </Boxed>
      </LeftCol>
      <RightCol>
        {PROJ.map((r, i) => (
          <ProjLine key={i} r={r} />
        ))}
        <Boxed $w={472}>
          <ProjRow $fill="#ededed">
            <Label><Txt $b>Cash Flow</Txt></Label>
            {['$25', '$28', '$30', '$33'].map(v => (
              <Val key={v}><Txt $b>{v}</Txt></Val>
            ))}
          </ProjRow>
          <ProjRow $fill="#ededed">
            <Label><Txt $b>Total Cash Flow</Txt></Label>
            <Val><Txt $b>$115</Txt></Val>
          </ProjRow>
        </Boxed>
      </RightCol>
    </Split>
  </Page>
);

export default function App() {
  return (
    <Screen>
      <GlobalStyle />
      <Excel>
        <TitleBar>
          <Svg w={8} h={11}>
            <rect width="8" height="11" rx="1" fill="#1f9d55" />
            <rect x="1" y="2" width="6" height="2" fill="#eee" />
            <rect x="1" y="6" width="2" height="2" fill="#eee" />
          </Svg>
          <DocTitle>
            01. LBO Overview Inserts • Saved <ChevronDown size={9} />
          </DocTitle>
          <SearchBox><Search size={10} />Search</SearchBox>
          <WindowButtons>
            <Avatar>RB</Avatar>
            <WinBtn $ml={17}>
              <Svg w={12} h={12}><path d="M3 1h6l2 3-5 7-5-7z" fill="#e8e8e8" /><path d="M1 4h10M6 1v10" stroke="#555" strokeWidth=".6" /></Svg>
            </WinBtn>
            <WinBtn $ml={20}><Minus size={10} /></WinBtn>
            <WinBtn $ml={22}>
              <Svg w={10} h={10}><rect x="1.5" y="2.5" width="6" height="6.5" rx="1" stroke="#e4e4e4" /><path d="M3.5 2V1H9v6H8" stroke="#e4e4e4" /></Svg>
            </WinBtn>
            <WinBtn $ml={21.5}><X size={11} /></WinBtn>
          </WindowButtons>
        </TitleBar>
        <MenuBar>
          <MenuTab>File</MenuTab>
          <MenuTab $active>Home</MenuTab>
          <MenuTab>Insert</MenuTab>
          <MenuTab>Draw</MenuTab>
          <MenuTab>Page Layout</MenuTab>
          <MenuTab>Formulas</MenuTab>
          <MenuTab>Data</MenuTab>
          <MenuTab>Review</MenuTab>
          <MenuTab>View</MenuTab>
          <MenuTab>Automate</MenuTab>
          <MenuTab>Developer</MenuTab>
          <MenuTab>Help</MenuTab>
          <MenuTab>Acrobat</MenuTab>
          <Comments><MessageSquare size={8} />Comments</Comments>
          <ShareBtn><ShareIcon size={8} />Share<Caret /></ShareBtn>
        </MenuBar>
        <Ribbon />
        <FormulaBar>
          <NameBox>4R x 3C<ChevronDown size={9} /></NameBox>
          <Dots>⋮</Dots>
          <FxBox>
            <X size={9} /><Check size={9} /><FxMark>fx</FxMark>
            <ChevronDown size={8} color="#c8c8c8" />
          </FxBox>
          <FormulaInput>=+E21+E22<ChevronUp size={10} color="#8a8a8a" /></FormulaInput>
        </FormulaBar>
        <ColHeaders>
          <Corner>
            <Svg w={13} h={13}><path d="M13 0V13H0Z" fill="#e8e8e8" /></Svg>
          </Corner>
          {COLS.map(([c, w, on]) => (
            <ColHead key={c} $w={w} $on={on}>{c}</ColHead>
          ))}
        </ColHeaders>
        <SheetBody>
          <RowHeaders>
            {ROWS.map(n => (
              <RowHead key={n} $h={rowHeight(n)} $on={n >= 21 && n <= 24}>{n}</RowHead>
            ))}
          </RowHeaders>
          <Canvas>
            <Sheet />
          </Canvas>
          <VScroll>
            <UpArrow />
            <VThumb />
            <DownArrow />
          </VScroll>
        </SheetBody>
        <TabsBar>
          <NavArrow><ChevronLeft size={9} /></NavArrow>
          <NavArrow $ml={12}><ChevronRight size={9} /></NavArrow>
          <SheetTab>Overview</SheetTab>
          <SheetTab $active><ActiveLabel>Paper LBO #1</ActiveLabel></SheetTab>
          <AddSheet />
          <SplitDots />
          <HScroll>
            <Svg w={5} h={7}><path d="M5 0V7L0 3.5Z" fill="#ddd" /></Svg>
            <Thumb />
            <Svg w={5} h={7}><path d="M0 0V7L5 3.5Z" fill="#ddd" /></Svg>
          </HScroll>
        </TabsBar>
        <StatusBar>
          <span>Ready</span>
          <StatusIcon>
            <Svg w={10} h={9}><rect x=".5" y=".5" width="9" height="8" stroke="#bbb" /><path d="M2 3h6M2 6h4" stroke="#bbb" /></Svg>
          </StatusIcon>
          <Accessibility><PersonStanding size={9} />Accessibility: Investigate</Accessibility>
          <StatusStats>
            <span>Average: $64</span>
            <span>Count: 8</span>
            <span>Min: ($125)</span>
            <span>Max: $250</span>
            <span>Sum: $255</span>
          </StatusStats>
          <ViewBtns>
            <Svg w={9} h={9}><rect x=".5" y=".5" width="8" height="8" stroke="#ddd" /><path d="M3 .5v8M6 .5v8M.5 3h8M.5 6h8" stroke="#ddd" /></Svg>
            <Svg w={9} h={9}><rect x=".5" y=".5" width="8" height="8" stroke="#bbb" /><rect x="2.5" y="2" width="4" height="5" stroke="#bbb" /></Svg>
            <Svg w={9} h={9}><path d="M.5 2v6.5h8V.5H6V3" stroke="#ddd" /></Svg>
          </ViewBtns>
          <ZoomMinus />
          <Zoomer />
          <Plus size={7} />
          <ZoomPct>160%</ZoomPct>
        </StatusBar>
      </Excel>
    </Screen>
  );
}
